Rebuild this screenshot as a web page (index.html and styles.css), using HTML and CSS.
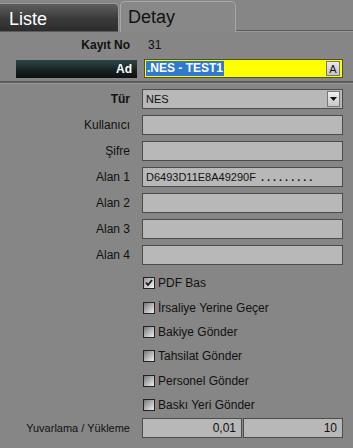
FILE: index.html
```html
<!DOCTYPE html>
<html lang="tr">
<head>
  <meta charset="UTF-8" />
  <title>Detay</title>
  <link rel="stylesheet" href="styles.css">
</head>
<body>
  <div class="tabs">
    <div class="tab tab-off">Liste</div>
    <div class="tab tab-on">Detay</div>
    <div class="tab-rest"></div>
  </div>

  <div class="panel">
    <div class="row head">
      <span class="lbl bold">Kayıt No</span>
      <span class="recno">31</span>
    </div>
    <div class="row ad-row">
      <span class="ad-lbl">Ad</span>
      <div class="inp yellow">
        <span class="sel">.NES - TEST1</span>
        <span class="abtn">A</span>
      </div>
    </div>
    <div class="sep"></div>

    <div class="row">
      <span class="lbl bold">Tür</span>
      <div class="inp">NES<span class="drop"><svg width="7" height="4" viewBox="0 0 7 4"><path d="M0 0h7L3.5 4z" fill="#111"/></svg></span></div>
    </div>
    <div class="row"><span class="lbl">Kullanıcı</span><div class="inp"></div></div>
    <div class="row"><span class="lbl">Şifre</span><div class="inp"></div></div>
    <div class="row"><span class="lbl">Alan 1</span><div class="inp">D6493D11E8A49290F<span class="dots">.........</span></div></div>
    <div class="row"><span class="lbl">Alan 2</span><div class="inp"></div></div>
    <div class="row"><span class="lbl">Alan 3</span><div class="inp"></div></div>
    <div class="row"><span class="lbl">Alan 4</span><div class="inp"></div></div>

    <div class="checks">
      <label class="chk"><span class="box on"><svg width="8" height="8" viewBox="0 0 8 8"><path d="M1 3.5l2 2.5 4-5" stroke="#222" stroke-width="2" fill="none"/></svg></span>PDF Bas</label>
      <label class="chk"><span class="box"></span>İrsaliye Yerine Geçer</label>
      <label class="chk"><span class="box"></span>Bakiye Gönder</label>
      <label class="chk"><span class="box"></span>Tahsilat Gönder</label>
      <label class="chk"><span class="box"></span>Personel Gönder</label>
      <label class="chk"><span class="box"></span>Baskı Yeri Gönder</label>
    </div>

    <div class="row last">
      <span class="lbl small">Yuvarlama / Yükleme</span>
      <div class="pair">
        <div class="inp num">0,01</div>
        <div class="inp num">10</div>
      </div>
    </div>
  </div>
</body>
</html>
```

FILE: styles.css
```css
* { box-sizing: border-box; }
body {
  margin: 0;
  width: 353px;
  height: 448px;
  background: #868686;
  font-family: "Liberation Sans", Arial, sans-serif;
  font-size: 12px;
  color: #111;
  overflow: hidden;
}

/* tabs */
.tabs {
  display: flex;
  align-items: flex-end;
  height: 32px;
}
.tab {
  height: 30px;
  font-size: 18px;
  padding: 5px 0 0 9px;
  border-radius: 0 5px 0 0;
}
.tab-off {
  width: 119px;
  height: 29px;
  color: #fff;
  background: linear-gradient(#5e5e5e, #3a3a3a 55%, #2c2c2c);
  border: 1px solid #9a9a9a;
  border-left: none;
  border-bottom: 1px solid #5b5b5b;
}
.tab-on {
  width: 116px;
  height: 31px;
  margin-left: 1px;
  color: #111;
  background: #888;
  border: 1px solid #a8a8a8;
  border-bottom: none;
  border-radius: 5px 5px 0 0;
  padding-left: 7px;
}
.tab-rest {
  flex: 1;
  background: #5a5a5a;
  border-bottom: 1px solid #9a9a9a;
  height: 2px;
}

/* form */
.panel { padding: 3px 10px 0 0; }
.row {
  display: flex;
  align-items: center;
  height: 20px;
  margin-bottom: 6px;
}
.lbl {
  width: 130px;
  flex: none;
  text-align: right;
  margin-right: 12px;
}
.bold { font-weight: bold; }
.head { margin-bottom: 4px; }
.recno { margin-left: 6px; }

.ad-row { height: 19px; margin-bottom: 0; }
.ad-lbl {
  width: 121px;
  height: 18px;
  margin: 0 7px 0 16px;
  padding: 2px 5px 0 0;
  text-align: right;
  font-weight: bold;
  color: #fff;
  background: linear-gradient(#2e4646, #162020 60%, #0c0f0f);
}

.inp {
  flex: 1;
  height: 20px;
  display: flex;
  align-items: center;
  padding: 0 3px;
  font-size: 11px;
  background: #b8b8b8;
  border: 1px solid #4c4c4c;
  position: relative;
}
.dots { letter-spacing: 3px; margin-left: 5px; font-weight: bold; }
.yellow {
  background: #ffff00;
  border: 1px solid #505020;
  font-weight: bold;
  font-size: 12px;
  height: 19px;
  padding-left: 1px;
}
.sel {
  background: #3079d0;
  color: #fff;
  padding: 0 1px;
  line-height: 15px;
}
.abtn {
  position: absolute;
  right: 2px;
  top: 1px;
  width: 14px;
  height: 15px;
  font-size: 11px;
  font-weight: normal;
  text-align: center;
  line-height: 14px;
  background: linear-gradient(#e8e8e8, #c4c4c4);
  border: 1px solid #777;
}
.drop {
  position: absolute;
  right: 2px;
  top: 1px;
  width: 13px;
  height: 16px;
  display: flex;
  align-items: center;
  justify-content: center;
  background: linear-gradient(#f0f0f0, #c8c8c8);
  border: 1px solid #777;
}

.sep {
  margin: 3px -10px 5px 0;
  background: #5c5c5c;
  border-bottom: 1px solid #999;
  height: 3px;
}

.checks {
  display: flex;
  flex-direction: column;
  gap: 10px;
  padding: 5px 0 0 143px;
  margin-bottom: 6px;
  font-size: 12px;
}
.chk {
  display: flex;
  align-items: center;
  height: 14.4px;
  gap: 3px;
}
.box {
  width: 12px;
  height: 12px;
  border: 1px solid #222;
  background: linear-gradient(135deg, #777, #eee);
  display: flex;
  align-items: center;
  justify-content: center;
}
.box.on { background: linear-gradient(135deg, #999, #f4f4f4); }

.small { font-size: 11px; }
.pair { flex: 1; display: flex; gap: 1px; }
.num { justify-content: flex-end; font-size: 12px; padding-right: 5px; }
```
